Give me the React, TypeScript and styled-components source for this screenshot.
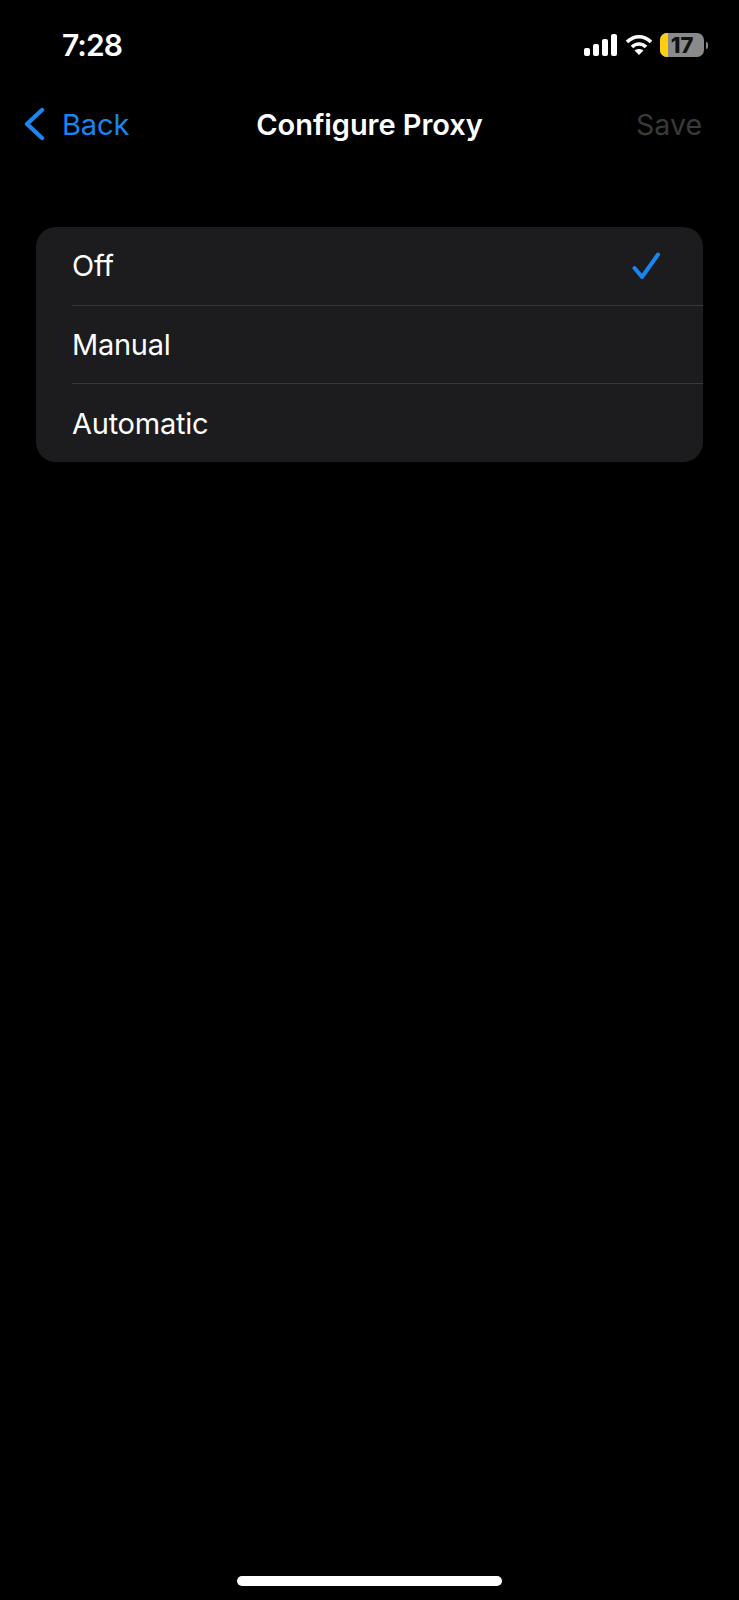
import React from "react";
import styled, { createGlobalStyle } from "styled-components";

const Global = createGlobalStyle`
  html, body { margin: 0; padding: 0; background: #000; }
  body { font-family: Inter, "Liberation Sans", sans-serif; -webkit-font-smoothing: antialiased; }
`;

const Screen = styled.div`
  width: 739px;
  height: 1600px;
  background: #000;
  color: #fff;
  display: flex;
  flex-direction: column;
  overflow: hidden;
`;

const StatusBar = styled.div`
  height: 88px;
  box-sizing: border-box;
  padding: 28px 31px 0 62px;
  display: flex;
  justify-content: space-between;
  align-items: flex-start;
`;

const Time = styled.div`
  font-size: 30px;
  line-height: 34px;
  font-weight: 600;
  letter-spacing: -0.9px;
`;

const StatusIcons = styled.div`
  display: flex;
  align-items: center;
  gap: 7px;
  height: 34px;
`;

const Battery = styled.div`
  position: relative;
  width: 44px;
  height: 24px;
  border-radius: 7px;
  background: #8a8a8a;
  overflow: hidden;
  display: flex;
  align-items: center;
  justify-content: center;
  color: #111;
  font-size: 22px;
  font-weight: 800;
  line-height: 24px;
`;

const BatteryFill = styled.div`
  position: absolute;
  left: 0;
  top: 0;
  bottom: 0;
  width: 8px;
  background: #ffcf0f;
`;

const BatteryWrap = styled.div`
  display: flex;
  align-items: center;
  gap: 2px;
`;

const BatteryCap = styled.div`
  width: 2px;
  height: 7px;
  border-radius: 0 3px 3px 0;
  background: #8a8a8a;
`;

const NavBar = styled.div`
  height: 72px;
  display: grid;
  grid-template-columns: 1fr auto 1fr;
  align-items: center;
  padding: 0 24px;
`;

const BackLink = styled.div`
  display: flex;
  align-items: center;
  gap: 17px;
  color: #1a84f0;
  font-size: 29px;
  letter-spacing: -0.1px;
`;

const Title = styled.div`
  font-size: 29px;
  font-weight: 600;
  letter-spacing: -0.05px;
`;

const SaveLink = styled.div`
  justify-self: end;
  margin-right: 13px;
  font-size: 28.5px;
  color: #3a3a3c;
`;

const Card = styled.div`
  margin: 67px 36px 0;
  border-radius: 20px;
  background: #1c1c1e;
  overflow: hidden;
`;

const Row = styled.div<{ $last?: boolean }>`
  height: ${(p) => (p.$last ? 78 : 78.5)}px;
  box-sizing: border-box;
  margin-left: 36px;
  padding-right: 42px;
  display: flex;
  align-items: center;
  justify-content: space-between;
  font-size: 29px;
  letter-spacing: -0.25px;
  border-bottom: ${(p) => (p.$last ? "none" : "1.5px solid #38383a")};
`;

const Spacer = styled.div`
  flex: 1;
`;

const HomeBar = styled.div`
  align-self: center;
  width: 265px;
  height: 10px;
  border-radius: 5px;
  background: #fff;
  margin-bottom: 14px;
`;

export default function App() {
  return (
    <Screen>
      <Global />
      <StatusBar>
        <Time>7:28</Time>
        <StatusIcons>
          <svg width="34" height="22" viewBox="0 0 34 22" fill="#fff">
            <rect x="0" y="14" width="6" height="8" rx="2" />
            <rect x="9" y="10" width="6" height="12" rx="2" />
            <rect x="18" y="5" width="6" height="17" rx="2" />
            <rect x="27" y="0" width="6" height="22" rx="2" />
          </svg>
          <svg width="28" height="22" viewBox="0 0 28 22" fill="none" stroke="#fff" strokeWidth="3.6">
            <path d="M2 8 C9 1 19 1 26 8" />
            <path d="M7 13 C11 9 17 9 21 13" />
            <path d="M14 21 L9.6 16.6 C12 14.6 16 14.6 18.4 16.6 Z" fill="#fff" stroke="none" />
          </svg>
          <BatteryWrap>
            <Battery>
              <BatteryFill />
              17
            </Battery>
            <BatteryCap />
          </BatteryWrap>
        </StatusIcons>
      </StatusBar>
      <NavBar>
        <BackLink>
          <svg width="21" height="34" viewBox="0 0 21 34" fill="none" stroke="#1a84f0" strokeWidth="4.4" strokeLinecap="round" strokeLinejoin="round">
            <path d="M18 3 L3 17 L18 31" />
          </svg>
          Back
        </BackLink>
        <Title>Configure Proxy</Title>
        <SaveLink>Save</SaveLink>
      </NavBar>
      <Card>
        <Row>
          Off
          <svg width="30" height="28" viewBox="0 0 30 28" fill="none" stroke="#1a84f0" strokeWidth="4" strokeLinecap="round" strokeLinejoin="round">
            <path d="M3.5 16 L11 25 L27 2.5" />
          </svg>
        </Row>
        <Row>Manual</Row>
        <Row $last>Automatic</Row>
      </Card>
      <Spacer />
      <HomeBar />
    </Screen>
  );
}
